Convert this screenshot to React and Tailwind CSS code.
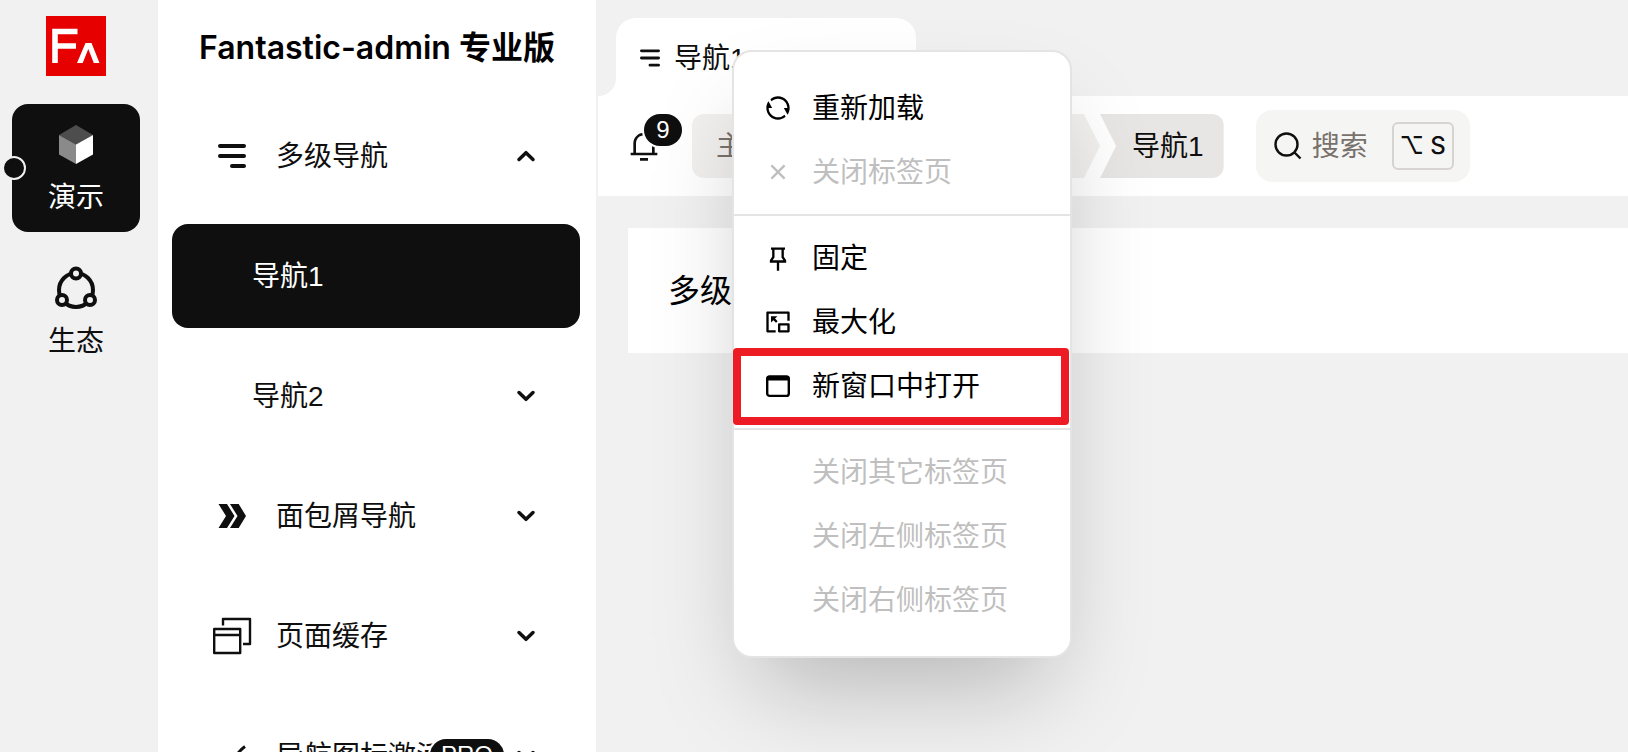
import React from "react";
import { RiRefreshLine, RiCloseLine, RiPushpin2Line, RiPictureInPictureExitLine, RiNotification3Line } from "react-icons/ri";

function LinesIcon({ className }) {
  return (
    <svg viewBox="0 0 28 24" className={className} stroke="currentColor" strokeWidth="4" strokeLinecap="round" fill="none" aria-hidden="true">
      <path d="M2 2H26M2 12H26M14 22H26" />
    </svg>
  );
}

function DoubleArrowIcon() {
  return (
    <svg viewBox="0 0 28 24" className="h-6 w-7" fill="currentColor" aria-hidden="true">
      <path d="M.5 0H9L16.5 12L9 24H.5L8 12ZM12 0H20.700L28 12L20.700 24H12L19.500 12Z" />
    </svg>
  );
}

function WindowsIcon() {
  return (
    <svg viewBox="0 0 40 40" className="size-10" fill="none" stroke="currentColor" strokeWidth="2.400" strokeLinejoin="round" aria-hidden="true">
      <rect x="2.200" y="13" width="26" height="24" />
      <path d="M2 19H28M11 9.500V3H38V28H31" />
    </svg>
  );
}

function SparkIcon() {
  return (
    <svg viewBox="0 0 40 40" className="size-10" fill="none" stroke="currentColor" strokeWidth="3" aria-hidden="true">
      <path d="M33 10.500Q28 14 24 20L33 30" />
    </svg>
  );
}

function Chevron({ up }) {
  return (
    <svg viewBox="0 0 20 12" className="h-3 w-5" fill="none" stroke="currentColor" strokeWidth="3.500" strokeLinejoin="round" strokeLinecap="round" aria-hidden="true">
      <path d={up ? "M3 9.500L10 2.700L17 9.500" : "M3 2.500L10 9.300L17 2.500"} />
    </svg>
  );
}

function CubeIcon() {
  return (
    <svg viewBox="0 0 40 40" className="size-10" aria-hidden="true">
      <path d="M20 1L37 11L20 20.500L3 11Z" fill="#4d4d4d" />
      <path d="M3 11L20 20.500V40L3 30.500Z" fill="#8a8a8a" />
      <path d="M37 11L20 20.500V40L37 30.500Z" fill="#fff" />
    </svg>
  );
}

function RingIcon() {
  return (
    <svg viewBox="0 0 44 44" className="size-11" fill="none" stroke="currentColor" strokeWidth="4" aria-hidden="true">
      <circle cx="22" cy="24" r="17" />
      <g fill="#f1f1f1">
        <circle cx="22" cy="7.500" r="5" />
        <circle cx="8" cy="34" r="5" />
        <circle cx="36" cy="34" r="5" />
      </g>
    </svg>
  );
}

function NewWindowIcon() {
  return (
    <svg viewBox="0 0 28 28" className="size-7" aria-hidden="true">
      <rect x="3.200" y="4.700" width="21.600" height="19.200" rx="2.500" fill="none" stroke="currentColor" strokeWidth="2.400" />
      <path d="M2.400 8.600V6.200Q2.400 3.600 5 3.600H23Q25.600 3.600 25.600 6.200V8.600Z" fill="currentColor" />
    </svg>
  );
}

function Logo() {
  return (
    <svg viewBox="0 0 60 60" className="size-[60px]" aria-label="Fantastic-admin" role="img">
      <rect width="60" height="60" fill="#e60000" />
      <path d="M6.200 12.700H31.500V18.300H11.800V27.200H30V32.800H11.800V47H6.200Z" fill="#fff" />
      <path d="M31 47L39.500 27H45.500L53.500 47H47.800L42.300 33L36.700 47Z" fill="#fff" />
    </svg>
  );
}

const sideItems = [
  { label: "多级导航", icon: <LinesIcon className="h-6 w-7" />, open: true },
  { label: "导航1", child: true, active: true },
  { label: "导航2", child: true },
  { label: "面包屑导航", icon: <DoubleArrowIcon /> },
  { label: "页面缓存", icon: <WindowsIcon /> },
  { label: "导航图标激活", icon: <SparkIcon />, badge: "PRO" },
];

const menuGroups = [
  [
    { label: "重新加载", icon: <RiRefreshLine className="size-7" /> },
    { label: "关闭标签页", icon: <RiCloseLine className="size-7" />, disabled: true },
  ],
  [
    { label: "固定", icon: <RiPushpin2Line className="size-7" /> },
    { label: "最大化", icon: <RiPictureInPictureExitLine className="size-7" /> },
    { label: "新窗口中打开", icon: <NewWindowIcon />, marked: true },
  ],
  [
    { label: "关闭其它标签页", disabled: true },
    { label: "关闭左侧标签页", disabled: true },
    { label: "关闭右侧标签页", disabled: true },
  ],
];

function SideItem({ item }) {
  return (
    <a
      href="#"
      className={
        "flex h-[104px] shrink-0 items-center rounded-2xl pr-11 " +
        (item.child ? "pl-20 " : "pl-10 ") +
        (item.active ? "bg-[#0f0f0f] text-white" : "")
      }
    >
      {item.icon && <span className="mr-6 flex w-10 shrink-0 justify-center">{item.icon}</span>}
      <span className="relative min-w-0 flex-1">
        <span className="block overflow-hidden pt-0.5 whitespace-nowrap">{item.label}</span>
        {item.badge && (
          <span className="absolute top-1 left-[154px] flex h-8 items-center rounded-full bg-[#0f0f0f] px-[11px] text-2xl leading-none text-white ring-2 ring-white">
            {item.badge}
          </span>
        )}
      </span>
      {!item.active && <Chevron up={item.open} />}
    </a>
  );
}

function ContextMenu() {
  return (
    <div
      role="menu"
      className="absolute top-[50px] left-[732px] w-[340px] divide-y-2 divide-[#e4e4e4] rounded-[20px] border-2 border-[#e4e4e4] bg-white py-[14px] text-black shadow-[0_50px_100px_-24px_rgba(0,0,0,0.25)]"
    >
      {menuGroups.map((group, i) => (
        <div key={i} className="flex flex-col py-[10px]">
          {group.map((item) => (
            <button
              key={item.label}
              type="button"
              role="menuitem"
              disabled={item.disabled}
              className={"relative flex h-16 items-center gap-5 px-[30px] " + (item.disabled ? "text-[#bfbfbf]" : "")}
            >
              <span className="size-7">{item.icon}</span>
              <span className="pt-0.5">{item.label}</span>
              {item.marked && (
                <span className="pointer-events-none absolute -top-1.5 right-px -bottom-[7px] -left-px rounded border-8 border-[#ed1c24]" />
              )}
            </button>
          ))}
        </div>
      ))}
    </div>
  );
}

const crumbFirst = "[clip-path:polygon(0_0,calc(100%-16px)_0,100%_50%,calc(100%-16px)_100%,0_100%)]";
const crumbMiddle = "[clip-path:polygon(0_0,calc(100%-16px)_0,100%_50%,calc(100%-16px)_100%,0_100%,16px_50%)]";
const crumbLast = "[clip-path:polygon(0_0,100%_0,100%_100%,0_100%,16px_50%)]";

export default function App() {
  return (
    <div className="relative flex h-screen overflow-hidden bg-[#f1f1f1] font-['Liberation_Sans','Noto_Sans_CJK_SC',sans-serif] text-[28px] leading-10 text-[#0f0f0f]">
      <nav className="flex w-[158px] shrink-0 flex-col items-center pt-4 pr-1.5">
        <Logo />
        <a href="#" className="relative mt-7 flex size-32 flex-col items-center rounded-2xl bg-[#0f0f0f] pt-5 text-white">
          <CubeIcon />
          <span className="mt-3.5">演示</span>
          <span className="absolute top-[52px] -left-2.5 size-6 rounded-full border-2 border-[#f1f1f1] bg-[#0f0f0f]" />
        </a>
        <a href="#" className="mt-4 flex size-32 flex-col items-center rounded-2xl pt-[18px]">
          <RingIcon />
          <span className="mt-3">生态</span>
        </a>
      </nav>

      <aside className="flex w-[438px] shrink-0 flex-col overflow-hidden bg-white">
        <h1 className="flex h-24 shrink-0 items-center justify-center font-['Inter','Noto_Sans_CJK_SC',sans-serif] text-[32px] font-semibold text-black">
          Fantastic-admin 专业版
        </h1>
        <div className="flex flex-col gap-4 pt-2 pr-4 pl-[14px]">
          {sideItems.map((item) => (
            <SideItem key={item.label} item={item} />
          ))}
        </div>
      </aside>

      <main className="min-w-0 flex-1 pl-0.5">
        <div className="flex h-24 items-end">
          <svg viewBox="0 0 18 18" className="size-[18px]" aria-hidden="true">
            <path d="M18 0V18H0A18 18 0 0 0 18 0Z" fill="#fff" />
          </svg>
          <a href="#" className="flex h-[78px] w-[300px] items-center gap-[14px] rounded-t-[20px] bg-white pt-0.5 pl-6">
            <LinesIcon className="h-[18px] w-5" />
            <span className="pt-0.5">导航1</span>
          </a>
        </div>

        <header className="flex h-[100px] items-center bg-white pl-[30px]">
          <button type="button" aria-label="通知" className="relative">
            <RiNotification3Line className="size-8" />
            <span className="absolute -top-4 left-4 flex h-8 w-[38px] items-center justify-center rounded-full bg-[#0f0f0f] text-2xl leading-none text-white ring-2 ring-white">
              9
            </span>
          </button>
          <nav className="ml-8 flex h-16 items-stretch overflow-hidden rounded-xl leading-[66px]">
            <a href="#" className={"bg-[#f1f0ef] pr-8 pl-6 text-[#78716c] " + crumbFirst}>主页</a>
            <a href="#" className={"bg-[#f1f0ef] px-8 text-[#78716c] " + crumbMiddle}>演示</a>
            <a href="#" className={"bg-[#f1f0ef] px-8 text-[#78716c] " + crumbMiddle}>多级导航</a>
            <a href="#" className={"bg-[#e7e6e4] pr-5 pl-8 " + crumbLast}>导航1</a>
          </nav>
          <button type="button" className="ml-8 flex h-[72px] items-center rounded-2xl bg-[#f5f5f4] pr-4 pl-[18px]">
            <svg viewBox="0 0 28 28" className="size-7" fill="none" stroke="currentColor" strokeWidth="2.400" aria-hidden="true">
              <circle cx="12.500" cy="12.500" r="11" />
              <path d="M20 20L26.500 26.500" />
            </svg>
            <span className="ml-2.5 pt-0.5 text-[#78716c]">搜索</span>
            <kbd className="ml-6 flex h-12 w-[62px] items-center justify-center gap-1.5 rounded-md border-2 border-[#d6d3d1] font-['Inter','DejaVu_Sans',sans-serif] text-2xl font-medium">
              <span>⌥</span>
              <span>S</span>
            </kbd>
          </button>
        </header>

        <section className="mt-8 ml-[30px] flex h-[125px] items-center bg-white px-10 text-[32px] text-black">
          <h2>多级导航</h2>
        </section>
      </main>

      <ContextMenu />
    </div>
  );
}
